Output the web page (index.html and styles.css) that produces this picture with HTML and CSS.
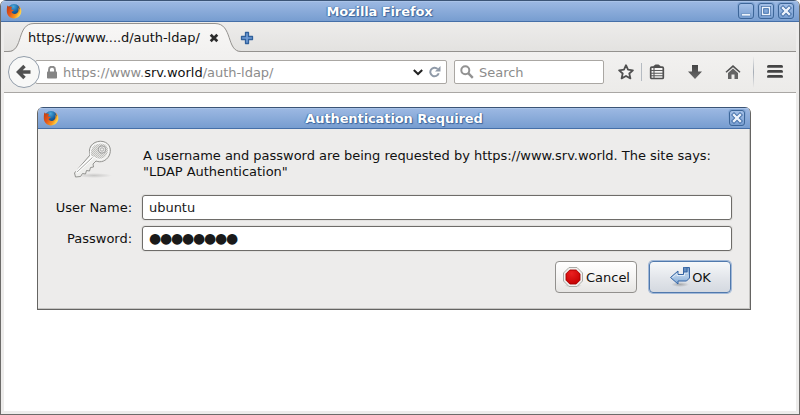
FILE: index.html
```
<!DOCTYPE html>
<html lang="en">
<head>
<meta charset="utf-8">
<title>Mozilla Firefox</title>
<link rel="stylesheet" href="styles.css">
</head>
<body>
<svg class="defs" width="0" height="0">
  <defs>
    <radialGradient id="globe" cx=".45" cy=".2" r=".8"><stop offset="0" stop-color="#4aa9dc"/><stop offset=".5" stop-color="#17609f"/><stop offset="1" stop-color="#0b2d60"/></radialGradient>
    <linearGradient id="fire" x1="0" y1="0" x2="1" y2=".6"><stop offset="0" stop-color="#b93a10"/><stop offset=".45" stop-color="#e5561a"/><stop offset=".8" stop-color="#f79a20"/><stop offset="1" stop-color="#ffdc50"/></linearGradient>
    <linearGradient id="ink" x1="0" y1="0" x2="0" y2="1"><stop offset="0" stop-color="#444"/><stop offset="1" stop-color="#6a6a6a"/></linearGradient>
    <linearGradient id="tabfill" x1="0" y1="0" x2="0" y2="1"><stop offset="0" stop-color="#f8f7f6"/><stop offset="1" stop-color="#f2f1f0"/></linearGradient>
    <linearGradient id="arrow" x1="0" y1="0" x2="0" y2="1"><stop offset="0" stop-color="#7199c8"/><stop offset=".5" stop-color="#b7cfe9"/><stop offset="1" stop-color="#7da6d4"/></linearGradient>
    <radialGradient id="red" cx=".4" cy=".25" r=".8"><stop offset="0" stop-color="#ea2020"/><stop offset="1" stop-color="#c40000"/></radialGradient>
    <pattern id="mesh" width="2" height="2" patternUnits="userSpaceOnUse"><rect width="2" height="2" fill="#e4e4e2"/><rect width="1" height="1" fill="#bdbdba"/><rect x="1" y="1" width="1" height="1" fill="#c4c4c1"/></pattern>
    <radialGradient id="shade"><stop offset="0" stop-color="#555" stop-opacity=".4"/><stop offset="1" stop-color="#555" stop-opacity="0"/></radialGradient>
    <symbol id="fox" viewBox="0 0 16 16">
      <circle cx="8" cy="7.600" r="6.600" fill="url(#globe)"/>
      <path d="M1.600 2.200C2 3.200 2.600 3.500 3.400 3.600c1.200-.1 2 .1 2.800.6L5 5.800c.2 1 1.200 1.100 2.700 1.200-.4 1.300-1.600 1.200-2.200 2 1 2 3.700 2.600 5.600 1.100 1.600-1.200 1.800-3.300.9-5 1.200.5 1.400 1.100 1.700 1.800.1-1.900-.7-3.300-1.900-4.700 2.100 1 3.500 3.400 3.500 6.100 0 4-3.200 7.100-7.300 7.100S.8 12.400.8 8.300c0-2.400.1-4.500.8-6.100z" fill="url(#fire)"/>
      <path d="M13.700 4.300c1.300 3.500.4 6.700-2.500 8.300 2.400-.4 3.900-2.200 4-4.500 0-1.500-.6-2.800-1.500-3.800z" fill="#ffcf45"/>
    </symbol>
    <symbol id="wclose" viewBox="0 0 16 16"><path d="M5 5l6 6M11 5l-6 6" stroke="#416da6" stroke-width="4.200" stroke-linecap="square"/><path d="M5 5l6 6M11 5l-6 6" stroke="#edf3fb" stroke-width="2.400" stroke-linecap="square"/></symbol>
  </defs>
</svg>
<div class="window">
  <header class="titlebar main">
    <svg class="fox" width="16" height="16"><use href="#fox"/></svg>
    <span class="title">Mozilla Firefox</span>
    <div class="controls">
      <span class="wbtn"><svg width="16" height="16"><path d="M3.500 10.500h9v2.500h-9z" fill="#edf3fb" stroke="#5d88bd" stroke-width=".7"/></svg></span>
      <span class="wbtn"><svg width="16" height="16"><path d="M4.500 4.500h7v7h-7z" fill="none" stroke="#416da6" stroke-width="3"/><path d="M4.500 4.500h7v7h-7z" fill="#82a7d8" stroke="#edf3fb" stroke-width="1.400"/><path d="M5.700 5.700h4.600v4.600H5.700z" fill="none" stroke="#4a75ad" stroke-width=".9"/></svg></span>
      <span class="wbtn"><svg width="16" height="16"><use href="#wclose"/></svg></span>
    </div>
  </header>
  <div class="frame">
    <div class="tabs">
      <div class="tab">
        <svg class="tabshape" width="240" height="30"><path d="M0 29.500H6C20 29.500 12 1.500 30 1.500H211C229 1.500 222 29.500 236 29.500H240V30H0z" fill="url(#tabfill)"/><path d="M0 29.500H4C20 29.500 12 1.500 30 1.500H211C229 1.500 222 29.500 237 29.500H240" fill="none" stroke="#94928f"/></svg>
        <span class="tabtext">https://www....d/auth-ldap/</span>
        <svg class="tabclose" width="10" height="10"><path d="M1.700 1.700l6.600 6.600M8.300 1.700L1.700 8.300" stroke="#2c2c2c" stroke-width="2.700"/></svg>
      </div>
      <svg class="plus" width="14" height="14"><path d="M5.500 1.500h3v4h4v3h-4v4h-3v-4h-4v-3h4z" fill="#6f9bd4" stroke="#31619c" stroke-width="1.300" stroke-linejoin="round"/></svg>
    </div>
    <nav class="navbar">
      <div class="back"><svg width="18" height="18"><path d="M15.500 9H5M9.500 3L3.500 9l6 6" fill="none" stroke="#505050" stroke-width="3.500"/></svg></div>
      <div class="url">
        <svg class="lock" width="10" height="13"><path d="M2 6V3.700a3 3 0 0 1 6 0V6" fill="none" stroke="#8b8b8b" stroke-width="1.900"/><rect y="5.500" width="10" height="7" rx=".8" fill="#858585"/></svg>
        <span class="address">https://www.<b>srv.world</b>/auth-ldap/</span>
        <svg class="chev" width="10" height="7"><path d="M.8 1l4.200 4 4.200-4" fill="none" stroke="#222" stroke-width="2"/></svg>
        <svg class="reload" width="12" height="12"><path d="M9.700 7.300A4.300 4.300 0 1 1 8.600 2.900" fill="none" stroke="#8f9aa8" stroke-width="2"/><path d="M11.500 0v5.500H6z" fill="#8f9aa8"/></svg>
      </div>
      <div class="search">
        <svg width="14" height="14"><circle cx="5.300" cy="5.300" r="4" fill="none" stroke="#929292" stroke-width="2"/><path d="M8.200 8.200l4.600 4.600" stroke="#929292" stroke-width="2.400"/></svg>
        <span>Search</span>
      </div>
      <div class="tools">
        <svg width="16" height="16"><path d="M8 1.200l2 4.500 4.900.6-3.600 3.200 1.100 4.900L8 12l-4.400 2.400 1.100-4.900L1.100 6.300 6 5.700z" fill="#f5f4f3" stroke="#505050" stroke-width="1.800" stroke-linejoin="round"/></svg>
        <i class="sep short"></i>
        <svg class="list" width="16" height="16"><path d="M4.500 3.500V2L6.500.5h3l2 1.500v1.500z" fill="#505050"/><rect x="1.700" y="3.200" width="12.600" height="11.300" rx="1" fill="#f5f4f3" stroke="#505050" stroke-width="1.700"/><path d="M2 6.500h12M2 9.200h12M2 11.800h12M5 3.500v11" stroke="#5a5a5a" stroke-width="1.100"/></svg>
        <svg class="down" width="16" height="16"><path d="M5 1h6v6.500h4L8 15 1 7.500h4z" fill="url(#ink)"/></svg>
        <svg class="home" width="16" height="16"><path d="M8 1l7.500 6.800-1 1L8 3.200 1.500 8.800l-1-1z" fill="#505050"/><path d="M8 4.500l5 4.400V15H9.500v-4.500h-3V15H3V8.900z" fill="#646464"/></svg>
        <i class="sep tall"></i>
        <svg class="menu" width="16" height="14"><path d="M1.500 1.500h13M1.500 6.500h13M1.500 11.500h13" stroke="#444" stroke-width="3" stroke-linecap="round"/><path d="M1 2.500h14M1 7.500h14M1 12.500h14" stroke="#707070" stroke-width="1"/></svg>
      </div>
    </nav>
    <main class="page">
      <section class="dialog">
        <header class="titlebar">
          <svg class="fox" width="16" height="16"><use href="#fox"/></svg>
          <span class="title">Authentication Required</span>
          <div class="controls"><span class="wbtn"><svg width="16" height="16"><use href="#wclose"/></svg></span></div>
        </header>
        <div class="form">
          <div class="keycell">
            <svg width="42" height="40"><ellipse cx="22" cy="36.500" rx="18" ry="2.500" fill="url(#shade)" opacity=".6"/><path d="M18 16C15 6 24 1 31 2.500 38 4 40 11 37 17c-3 5-8 7-13 5l-3 3 .5 3-3 .5-1 3.500-3-.5-1 3.500-3-.5-2 3-5 .5-1-4z" fill="#eeeeec" stroke="#92928f"/><path d="M18.500 17C17 8 23 3.500 30 4c6 .5 8 6 5.500 11.500-3 5-8 6-12 3.500z" fill="url(#mesh)" stroke="#fff"/><path d="M21 19L5 34M19 18L4 32.500" stroke="#fff" stroke-width="1.200"/><path d="M20.500 18.500L5 33" stroke="#a9a9a6"/><circle cx="30" cy="10.500" r="3.700" fill="#ededeb" stroke="#999"/><circle cx="30" cy="10.500" r="1.700" fill="#ededeb" stroke="#aaa"/></svg>
          </div>
          <p class="message">A username and password are being requested by https://www.srv.world. The site says:<br>"LDAP Authentication"</p>
          <label class="label">User Name:</label>
          <div class="field">ubuntu</div>
          <label class="label">Password:</label>
          <div class="field"><span class="dots">●●●●●●●●</span></div>
        </div>
        <div class="buttons">
          <div class="button"><svg width="22" height="22"><ellipse cx="11" cy="19.500" rx="9" ry="2" fill="url(#shade)"/><path d="M7 1.500h8L20.500 7v8L15 20.500H7L1.500 15V7z" fill="#f1f1ef" stroke="#aaaaa6"/><path d="M7.800 4h6.400L18 7.800v6.400L14.200 18H7.800L4 14.200V7.800z" fill="url(#red)" stroke="#a60000" stroke-width=".9"/></svg><span>Cancel</span></div>
          <div class="button ok"><svg width="22" height="22"><ellipse cx="11" cy="18.500" rx="9" ry="2.500" fill="url(#shade)"/><path d="M1.500 11.500L9 5v3.500h5.500V1.500h6V12l-3 3H9v3z" fill="url(#arrow)" stroke="#3565a4" stroke-linejoin="round"/><path d="M14.500 1.500V6h3.500V2" fill="#648dbf" stroke="#3565a4"/><path d="M3.500 11.500L8 7.500v2h7.500V7.200H19" fill="none" stroke="#e4eef8" stroke-width=".9"/></svg><span>OK</span></div>
        </div>
      </section>
    </main>
  </div>
</div>
</body>
</html>
```
FILE: styles.css
```
* { box-sizing: border-box; }
body { margin: 0; background: #fff; font: 13px/16px "DejaVu Sans", sans-serif; letter-spacing: -0.025px; color: #1a1a1a; }
svg { display: block; flex: none; }
.defs { position: absolute; }
.window { height: 415px; display: flex; flex-direction: column; background: #edeceb; border: 1px solid #6c6b69; border-top: 0; border-radius: 6px 6px 0 0; overflow: hidden; }
.titlebar { height: 22px; flex: none; display: grid; grid-template-columns: 60px 1fr 60px; align-items: center; background: linear-gradient(#9db9e3, #779dd0); border-top: 1px solid #3b5476; border-bottom: 1px solid #456fa8; box-shadow: inset 0 1px #a9c3e8; padding: 0 5px; }
.title { text-align: center; color: #fff; font-weight: bold; font-size: 13px; letter-spacing: -0.1px; padding-top: 1px; text-shadow: 0 0 1px #31598f, 1px 1px 1px #3d679f, -1px 0 1px #5880b4; white-space: nowrap; }
.main { grid-template-columns: 19px 1fr 60px; }
.controls { display: flex; gap: 4px; justify-content: flex-end; }
.wbtn { width: 16px; height: 16px; border: 1px solid #3d6699; border-radius: 3px; background: linear-gradient(#a3bfe7, #789ed0); box-shadow: 0 0 0 1px #83a6d5; }
.wbtn svg { margin: -1px; }
.frame { flex: 1; display: flex; flex-direction: column; margin: 0 3px 3px; }
.tabs { height: 30px; flex: none; display: flex; align-items: center; background: linear-gradient(#edeceb 0, #e3e2e0 29px, #94928f 29px); }
.tab { width: 240px; height: 30px; position: relative; display: flex; align-items: center; padding: 2px 0 0 24px; }
.tabshape { position: absolute; left: 0; top: 0; }
.tabtext { position: relative; width: 173px; white-space: nowrap; color: #111; letter-spacing: -0.05px; }
.tabclose { position: relative; margin-left: 8px; }
.plus { margin: 2px 0 0 -4px; }
.navbar { height: 41px; flex: none; display: flex; align-items: center; background: linear-gradient(#f2f1f0, #ecebe9); border-bottom: 1px solid #a9a7a4; padding-left: 4px; }
.back { width: 32px; height: 32px; border: 1px solid #929daa; border-radius: 50%; background: #f8f8f7; display: grid; place-items: center; z-index: 1; flex: none; }
.back svg { margin-left: -1px; }
.url { width: 412px; height: 24px; margin-left: -5px; border: 1px solid #aaa7a3; border-radius: 2px; background: #fff; display: flex; align-items: center; flex: none; padding: 0 5px 0 11px; }
.address { flex: 1; margin-left: 6px; padding-top: 2px; color: #8c8c8c; }
.address b { font-weight: normal; color: #111; }
.chev { margin-right: 6px; }
.search { width: 150px; height: 24px; margin-left: 7px; border: 1px solid #aaa7a3; border-radius: 2px; background: #fff; display: flex; align-items: center; flex: none; padding-left: 5px; gap: 5px; color: #8c8c8c; }
.search span { padding-top: 2px; }
.tools { display: flex; align-items: center; margin-left: 14px; height: 40px; }
.sep { width: 1px; background: #b5bbc2; }
.short { height: 18px; margin: 0 7px; }
.tall { height: 32px; margin: 0 13px 0 12px; background: linear-gradient(transparent, #a5acb5, transparent); }
.down, .home { margin-left: 22px; }
.page { flex: 1; background: #fff; padding: 14px 0 0 33px; }
.dialog { width: 714px; height: 203px; background: #edeceb; border: 1px solid #656462; border-top: 0; border-radius: 6px 6px 0 0; overflow: hidden; box-shadow: inset -1px -1px #c5c4c2; }
.form { display: grid; grid-template-columns: 94px 590px; grid-template-rows: 60px 25px 25px; gap: 6px 10px; align-items: center; }
.keycell { justify-self: start; margin-left: 34px; }
.message { margin: 10px 0 0 1px; white-space: nowrap; color: #111; }
.label { text-align: right; color: #111; }
.field { height: 25px; border: 1px solid #6e6c69; border-radius: 3px; background: #fff; line-height: 23px; padding-left: 6px; box-shadow: 0 0 0 1px #e2e1df; overflow: hidden; }
.dots { font-size: 14px; line-height: 23px; letter-spacing: -1.2px; }
.buttons { display: flex; justify-content: flex-end; gap: 12px; margin: 10px 19px 0 0; }
.button { width: 82px; height: 32px; border: 1px solid #92908d; border-radius: 4px; background: linear-gradient(#fff, #f5f4f3 50%, #e6e5e3); display: flex; align-items: center; justify-content: center; gap: 2px; color: #111; }
.button span { padding-top: 2px; }
.ok { border-color: #5079ad; background: linear-gradient(#f6f8fa, #e2e5ea 55%, #d4d9e0); box-shadow: 0 0 0 1px #a2b9d8; gap: 1px; }
```
